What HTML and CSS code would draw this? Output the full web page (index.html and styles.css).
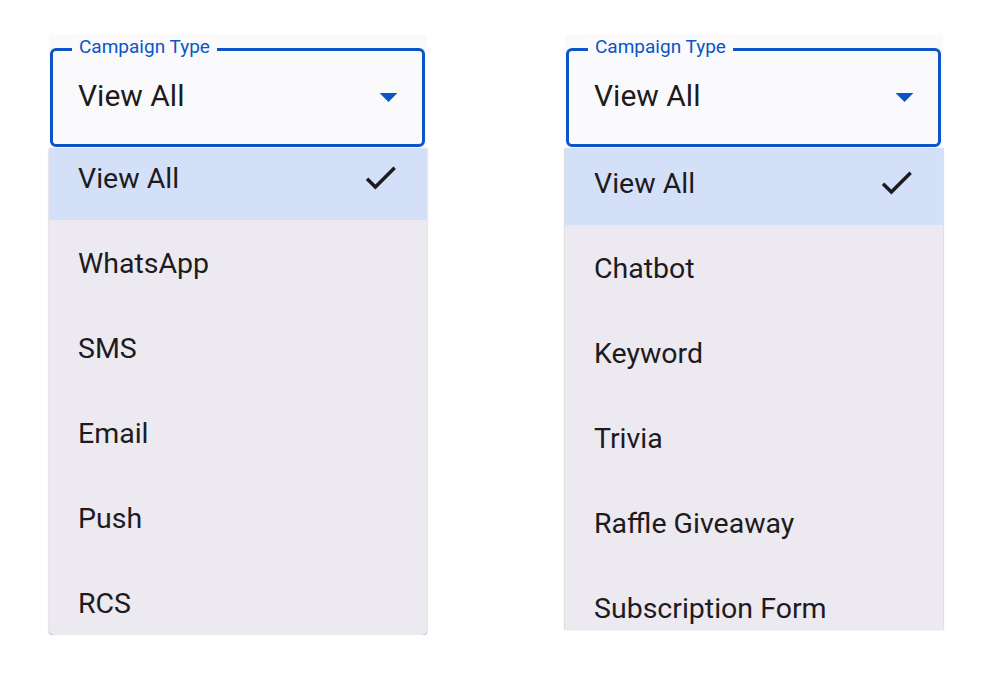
FILE: index.html
```html
<!DOCTYPE html>
<html>
<head>
<meta charset="utf-8">
<link rel="stylesheet" href="styles.css">
</head>
<body>
<div class="page">
  <div class="panel">
    <div class="field-wrap">
      <div class="field">
        <span class="label">Campaign Type</span>
        <span class="value">View All</span>
        <svg class="arrow" viewBox="0 0 24 24"><path d="M7 10l5 5 5-5z"/></svg>
      </div>
    </div>
    <div class="menu menu-left">
      <ul class="list list-left">
        <li class="item selected"><span>View All</span><svg class="check" viewBox="0 0 24 24"><path d="M9 16.17L4.83 12l-1.42 1.41L9 19 21 7l-1.41-1.41z"/></svg></li>
        <li class="item"><span>WhatsApp</span></li>
        <li class="item"><span>SMS</span></li>
        <li class="item"><span>Email</span></li>
        <li class="item"><span>Push</span></li>
        <li class="item"><span>RCS</span></li>
      </ul>
    </div>
  </div>
  <div class="panel">
    <div class="field-wrap">
      <div class="field">
        <span class="label">Campaign Type</span>
        <span class="value">View All</span>
        <svg class="arrow" viewBox="0 0 24 24"><path d="M7 10l5 5 5-5z"/></svg>
      </div>
    </div>
    <div class="menu menu-right">
      <ul class="list list-right">
        <li class="item selected"><span>View All</span><svg class="check" viewBox="0 0 24 24"><path d="M9 16.17L4.83 12l-1.42 1.41L9 19 21 7l-1.41-1.41z"/></svg></li>
        <li class="item"><span>Chatbot</span></li>
        <li class="item"><span>Keyword</span></li>
        <li class="item"><span>Trivia</span></li>
        <li class="item"><span>Raffle Giveaway</span></li>
        <li class="item"><span>Subscription Form</span></li>
      </ul>
    </div>
  </div>
</div>
</body>
</html>
```

FILE: styles.css
```css
* { box-sizing: border-box; }
html, body { margin: 0; padding: 0; background: #ffffff; }
body { font-family: Roboto, "Liberation Sans", sans-serif; color: #1d1b20; }

.page {
  display: flex;
  gap: 138px;
  padding: 35px 0 0 49px;
}

.panel {
  width: 378px;
  display: flex;
  flex-direction: column;
}

.field-wrap {
  background: #fafafd;
  padding: 13px 2px 0 1px;
}

.field {
  position: relative;
  height: 99px;
  border: 3px solid #0b55c6;
  border-radius: 6px;
  display: flex;
  align-items: center;
  justify-content: space-between;
  padding: 0 12px 0 25px;
}

.label {
  position: absolute;
  left: 19px;
  top: -17px;
  padding: 0 7px;
  background: #fafafd;
  color: #0b55c6;
  font-size: 19px;
  line-height: 26px;
}

.value {
  font-size: 30px;
  line-height: 36px;
  margin-top: -3px;
  color: #1d1b20;
}

.arrow {
  width: 43px;
  height: 43px;
  fill: #0b55c6;
  margin-top: -2px;
}

.menu {
  margin-top: 1px;
  background: #ece9f1;
  overflow: hidden;
}

.menu-left {
  height: 487px;
  border-radius: 0 0 5px 5px;
  box-shadow: 0 1px 2px rgba(0,0,0,0.28), 0 0 1px rgba(0,0,0,0.25);
}

.menu-right {
  height: 482px;
  box-shadow: -1px 0 1px rgba(0,0,0,0.12), 1px 0 1px rgba(0,0,0,0.12);
}

.list {
  list-style: none;
  margin: 0;
  padding: 0;
}
.list-left { margin-top: -13px; }
.list-right { margin-top: -8px; }

.item {
  height: 85px;
  display: flex;
  align-items: center;
  justify-content: space-between;
  padding: 2px 26px 0 29px;
  font-size: 28.5px;
  color: #1d1b20;
}

.item .check { margin-top: -2px; }

.item.selected { background: #d4dff8; }

.check {
  width: 41px;
  height: 41px;
  fill: #1d1b20;
}
```
